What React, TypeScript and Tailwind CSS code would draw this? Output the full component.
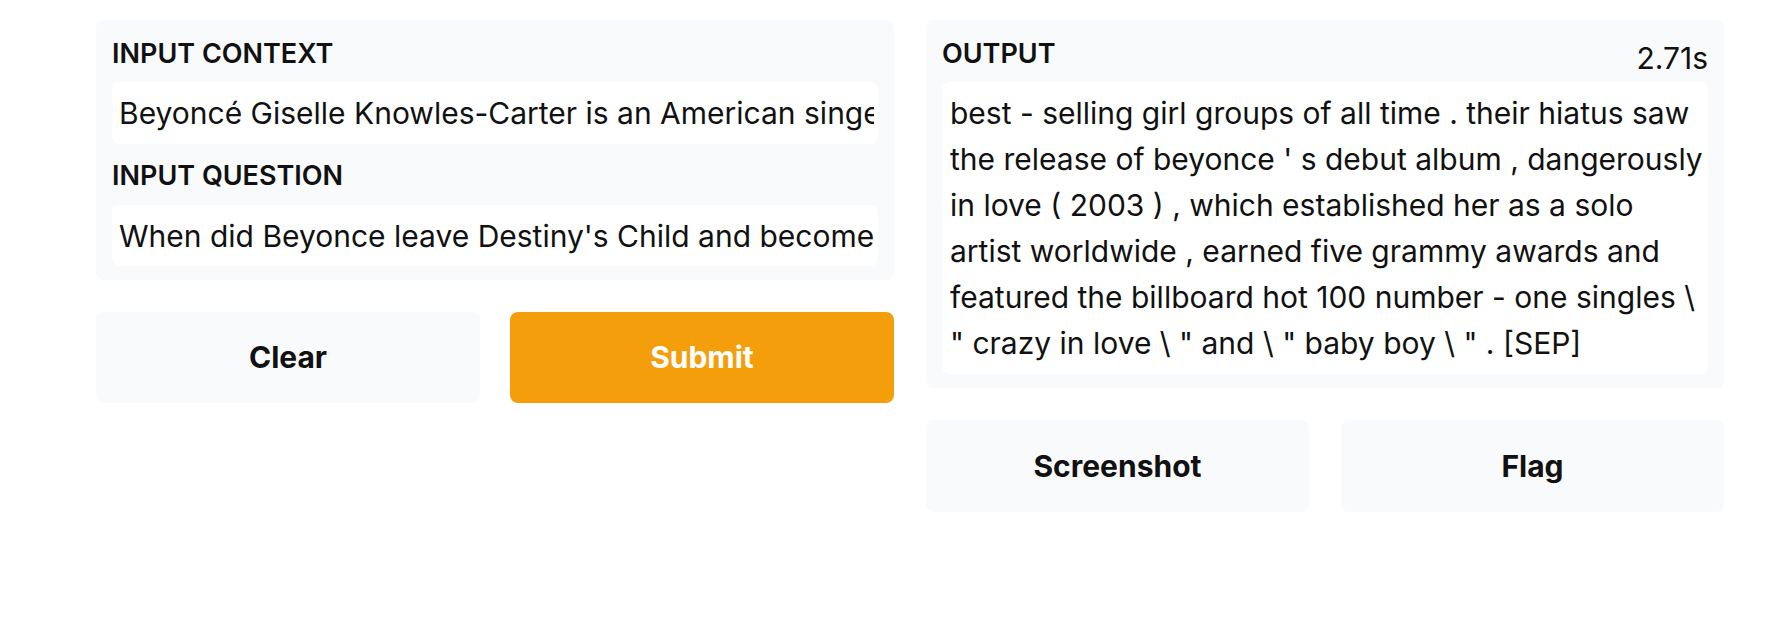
import React from "react";

const outputLines = [
  "best - selling girl groups of all time . their hiatus saw",
  "the release of beyonce ' s debut album , dangerously",
  "in love ( 2003 ) , which established her as a solo",
  "artist worldwide , earned five grammy awards and",
  "featured the billboard hot 100 number - one singles \\",
  "\" crazy in love \\ \" and \\ \" baby boy \\ \" . [SEP]",
];

const Field: React.FC<{ label: string; value: string; className?: string }> = ({
  label,
  value,
  className,
}) => {
  return (
    <div className={className}>
      <div className="text-[27px] leading-[36px] font-semibold uppercase text-[#111]">
        {label}
      </div>
      <input
        readOnly
        value={value}
        className="mt-[10px] w-full h-[62px] bg-white rounded-lg pl-[7px] pr-[4px] text-[30px] text-[#111] outline-none"
      />
    </div>
  );
};

const App: React.FC = () => {
  return (
    <div
      className="w-[1784px] h-[636px] bg-white pl-[96px] pr-[60px] pt-5 grid grid-cols-2 gap-8 items-start"
      style={{ fontFamily: "Inter, 'Noto Sans', sans-serif" }}
    >
      {/* inputs */}
      <div className="flex flex-col">
        <div className="bg-gray-50 rounded-lg px-4 pt-4 pb-[14px]">
          <Field
            label="Input Context"
            value="Beyoncé Giselle Knowles-Carter is an American singer, songwriter, record producer and actress."
          />
          <Field
            className="mt-[14px] [&>input]:mt-[11px] [&>input]:h-[61px]"
            label="Input Question"
            value="When did Beyonce leave Destiny's Child and become a solo singer?"
          />
        </div>
        <div className="mt-8 grid grid-cols-2 gap-[30px]">
          <button className="h-[91px] rounded-lg bg-gray-50 text-[30px] font-bold text-[#111]">
            Clear
          </button>
          <button className="h-[91px] rounded-lg bg-[#f59e0b] text-[30px] font-bold text-white">
            Submit
          </button>
        </div>
      </div>

      {/* output */}
      <div className="flex flex-col">
        <div className="bg-gray-50 rounded-lg px-4 pt-4 pb-[14px]">
          <div className="flex justify-between h-[36px]">
            <div className="text-[27px] leading-[36px] font-semibold text-[#111]">OUTPUT</div>
            <div className="text-[30px] leading-[36px] pt-1 text-[#111]">2.71s</div>
          </div>
          <div className="mt-[10px] bg-white rounded-lg px-2 py-2 text-[30px] leading-[46px] text-[#111]">
            {outputLines.map((line, i) => (
              <div key={i} className="whitespace-nowrap">
                {line}
              </div>
            ))}
          </div>
        </div>
        <div className="mt-8 grid grid-cols-2 gap-8">
          <button className="h-[92px] rounded-lg bg-gray-50 text-[30px] font-bold text-[#111]">
            Screenshot
          </button>
          <button className="h-[92px] rounded-lg bg-gray-50 text-[30px] font-bold text-[#111]">
            Flag
          </button>
        </div>
      </div>
    </div>
  );
};

export default App;
